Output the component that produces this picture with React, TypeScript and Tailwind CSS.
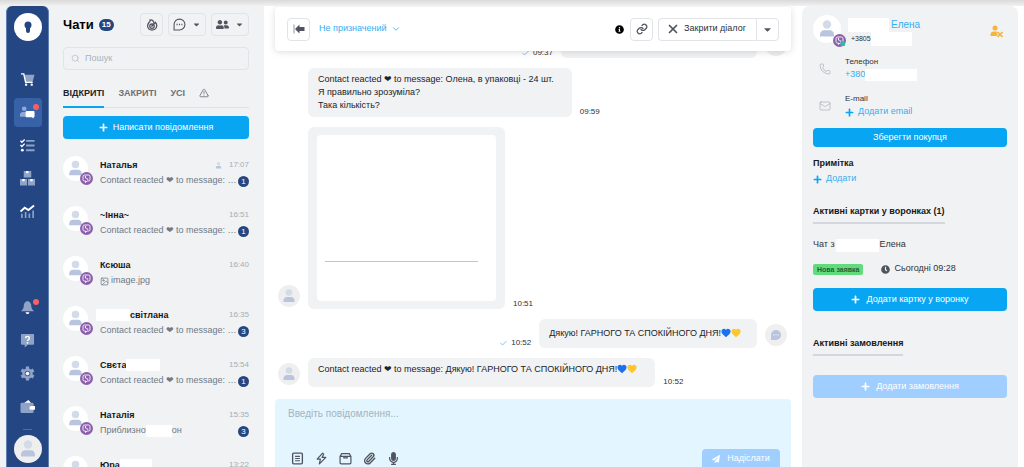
import type { ReactNode } from "react";
import {
	FaCaretDown,
	FaClock,
	FaInfoCircle,
	FaMicrophone,
	FaPaperPlane,
	FaPlus,
	FaUserFriends,
} from "react-icons/fa";
import {
	ChevronDown,
	Image,
	Mail,
	Paperclip,
	Phone,
	Search,
	TriangleAlert,
	X,
} from "lucide-react";

interface Chat {
	id: number;
	name: ReactNode;
	label: string;
	text: ReactNode;
	time: string;
	unread?: number;
	assigned?: boolean;
}

const reacted = "Contact reacted ❤ to message: …";

const chats: Chat[] = [
	{ id: 1, label: "Наталья", name: "Наталья", text: reacted, time: "17:07", unread: 1, assigned: true },
	{ id: 2, label: "Інна", name: "~Інна~", text: reacted, time: "16:51", unread: 1 },
	{
		id: 3,
		label: "Ксюша",
		name: "Ксюша",
		text: (
			<>
				<Image className="size-[9px]" strokeWidth={2} />
				image.jpg
			</>
		),
		time: "16:40",
	},
	{
		id: 4,
		label: "світлана",
		name: (
			<>
				<Mask className="-ml-1 h-3 w-[34px]" />
				світлана
			</>
		),
		text: reacted,
		time: "16:35",
		unread: 3,
	},
	{
		id: 5,
		label: "Свєта",
		name: (
			<>
				Свєта
				<Mask className="h-3 w-[34px]" />
			</>
		),
		text: reacted,
		time: "15:54",
		unread: 1,
	},
	{
		id: 6,
		label: "Наталія",
		name: "Наталія",
		text: (
			<span className="flex items-center">
				Приблизно
				<Mask className="h-3 w-[26px]" />
				он
			</span>
		),
		time: "15:35",
		unread: 3,
	},
	{
		id: 7,
		label: "Юра",
		name: (
			<>
				Юра
				<Mask className="h-3 w-8" />
			</>
		),
		text: reacted,
		time: "13:22",
	},
];

function Mask({ className }: { className: string }) {
	return <span className={`inline-block shrink-0 bg-white ${className}`} />;
}

function Avatar({ className }: { className: string }) {
	return (
		<span className={`flex shrink-0 items-center justify-center rounded-full ${className}`}>
			<svg viewBox="0 0 24 24" className="size-full">
				<circle cx="12" cy="8.2" r="3.6" fill="#d3dae8" />
				<path d="M6 18.5v-1.8c0-2.2 1.7-3.6 3.6-3.6h4.8c2 0 3.6 1.4 3.6 3.6v1.8z" fill="#b9c5de" />
			</svg>
		</span>
	);
}

function ViberBadge({ online }: { online?: boolean }) {
	return (
		<svg viewBox="0 0 26 26" className="absolute -right-[5px] -bottom-1 size-[13px]">
			<circle cx="13" cy="13" r="13" fill="#8a5eab" />
			<path
				d="M9 6h8a3 3 0 0 1 3 3v6a3 3 0 0 1-3 3h-2.7L11 21v-3H9a3 3 0 0 1-3-3V9a3 3 0 0 1 3-3z"
				fill="none"
				stroke="#fff"
				strokeWidth="1.8"
			/>
			<path
				d="M9.5 8.5c0 3.5 2.5 6.5 6.5 7l1-1.6-2-1.4-1 .8c-1-.4-1.9-1.5-2.2-2.5l.8-.8-1.3-2z"
				fill="#fff"
			/>
			{online && <rect x="15" y="15" width="9" height="9" rx="2" fill="#2fb9a4" />}
		</svg>
	);
}

function Heart({ color, label }: { color: "blue" | "yellow"; label: string }) {
	return (
		<svg viewBox="0 0 24 24" role="img" aria-label={label} className="inline-block size-[10px] align-[-2px]">
			<path
				d="M12 22C7 18 1 13.5 1 8a6 6 0 0 1 11-3.2A6 6 0 0 1 23 8c0 5.5-6 10-11 14z"
				fill={color === "blue" ? "#1a70ee" : "#fdc62e"}
			/>
		</svg>
	);
}

function NavItem({ label, active, dot, children }: { label: string; active?: boolean; dot?: boolean; children: ReactNode }) {
	return (
		<a
			href="#"
			aria-label={label}
			className={`relative flex h-[29px] w-7 shrink-0 items-center justify-center rounded ${active ? "bg-[#3762a8]" : ""}`}
		>
			<svg viewBox="0 0 32 32" className="size-[15px]">
				{children}
			</svg>
			{dot && (
				<span className="absolute top-[6px] right-[3px] size-[6px] rounded-full bg-[#fb5f62]" />
			)}
		</a>
	);
}

function Sidebar() {
	return (
		<nav className="ml-[6px] flex w-[43px] shrink-0 flex-col items-center gap-1 rounded-t-md border-x border-[#5f7fb3] bg-[#244683] pt-[7px] pb-1">
			<a href="#" aria-label="Головна" className="mb-5 flex size-7 shrink-0 items-center justify-center rounded-full bg-white">
				<svg viewBox="0 0 28 28" className="size-7">
					<circle cx="14" cy="12" r="3.5" fill="#244683" />
					<path d="M12 12h4v6a2 2 0 0 1-4 0z" fill="#244683" />
				</svg>
			</a>
			<NavItem label="Замовлення">
				<path d="M9 6h22l-4 14H12z" fill="#8fa3c8" />
				<path d="M2 4h6l4 18h15" fill="none" stroke="#fff" strokeWidth="3" />
				<circle cx="13" cy="27" r="2.5" fill="#fff" />
				<circle cx="25" cy="27" r="2.5" fill="#fff" />
			</NavItem>
			<NavItem label="Чати" active dot>
				<circle cx="9" cy="8" r="5" fill="#8fa9d4" />
				<path d="M0 25v-4c0-4 3-6 6-6h7v10z" fill="#8fa9d4" />
				<path d="M14 13h15a2 2 0 0 1 2 2v9a2 2 0 0 1-2 2v3l-4-3H14a2 2 0 0 1-2-2v-9a2 2 0 0 1 2-2z" fill="#fff" />
			</NavItem>
			<NavItem label="Задачі">
				<path d="M13 6h18M13 16h18M13 26h18" stroke="#8fa3c8" strokeWidth="4" />
				<path d="M1 6l3 3 6-6M1 15l3 3 6-6" fill="none" stroke="#fff" strokeWidth="3" />
				<circle cx="5" cy="26" r="3" fill="#fff" />
			</NavItem>
			<NavItem label="Склад">
				<path d="M8 0h16v14H8zM0 17h15v14H0zM17 17h15v14H17z" fill="#8fa3c8" />
				<path d="M13 0h5v5h-5zM5 17h5v5H5zM22 17h5v5h-5z" fill="#fff" />
			</NavItem>
			<NavItem label="Аналітика">
				<path d="M4 21v9M12 17v13M20 20v10M28 14v16" stroke="#8fa3c8" strokeWidth="3.5" />
				<path d="M1 16l9-8 8 5L30 3" fill="none" stroke="#fff" strokeWidth="4" />
			</NavItem>
			<div className="flex-1" />
			<NavItem label="Сповіщення" dot>
				<path d="M16 2c-6 1-8 6-8 11 0 6-3 8-6 11h28c-3-3-6-5-6-11 0-5-2-10-8-11z" fill="#8fa3c8" />
				<path d="M12 26h8c0 5-8 5-8 0z" fill="#fff" />
			</NavItem>
			<NavItem label="Допомога">
				<path d="M4 2h24a2 2 0 0 1 2 2v19a2 2 0 0 1-2 2H17l-7 6v-6H4a2 2 0 0 1-2-2V4a2 2 0 0 1 2-2z" fill="#8fa3c8" />
				<path d="M12 11c0-5 8-5 8 0 0 3-4 3-4 6" fill="none" stroke="#fff" strokeWidth="3" />
				<circle cx="16" cy="21" r="2" fill="#fff" />
			</NavItem>
			<NavItem label="Налаштування">
				<circle cx="16" cy="16" r="11" fill="#8fa3c8" />
				<path d="M16 1v30M3 8.5l26 15M3 23.5l26-15" stroke="#8fa3c8" strokeWidth="7" />
				<circle cx="16" cy="16" r="6" fill="#4465a0" />
				<circle cx="16" cy="16" r="3.8" fill="#fff" />
			</NavItem>
			<NavItem label="Гаманець">
				<path d="M8 9l10-7 6 7z" fill="#fff" />
				<path d="M4 8h22a3 3 0 0 1 3 3v16a3 3 0 0 1-3 3H4a3 3 0 0 1-3-3V11a3 3 0 0 1 3-3z" fill="#8fa3c8" />
				<path d="M24 15h8v8h-8a4 4 0 0 1 0-8z" fill="#fff" />
			</NavItem>
			<div className="mt-1 mb-px h-px w-[9px] bg-[#4c6ca4]" />
			<Avatar className="size-7 bg-[#efefef]" />
		</nav>
	);
}

function ToolButton({ label, className = "", children }: { label: string; className?: string; children: ReactNode }) {
	return (
		<button
			type="button"
			aria-label={label}
			className={`flex h-[23px] shrink-0 items-center justify-center rounded-sm border border-[#e1e3e7] text-[#50545e] ${className}`}
		>
			{children}
		</button>
	);
}

function ChatList() {
	return (
		<section className="flex w-[215px] shrink-0 flex-col overflow-hidden pt-[7px] pr-[15px] pl-[14px]">
			<div className="flex items-center gap-[5px]">
				<h1 className="text-[13px] leading-5 font-bold text-black">Чати</h1>
				<span className="rounded-full bg-[#244683] px-[3px] text-[8px] leading-[12px] font-bold text-white">15</span>
				<div className="flex-1" />
				<ToolButton label="Активність" className="w-[23px]">
					<svg viewBox="0 0 24 24" className="size-3" fill="none" stroke="currentColor" strokeWidth="2.5">
						<path d="M8 2c1 2 0 3-2 5-5 6-3 15 6 15s12-9 7-15c-1 2-2 2-3 2 0-4-3-8-8-7z" />
						<circle cx="12" cy="14" r="4.5" />
						<path d="M12 10v4l3-2" />
					</svg>
				</ToolButton>
				<ToolButton label="Канал" className="w-[38px] gap-[6px]">
					<svg viewBox="0 0 24 24" className="size-[13px]" fill="none" stroke="currentColor" strokeWidth="2">
						<path d="M2 22V12a10 10 0 1 1 10 10z" />
						<path d="M6.5 12h2M11 12h2M15.5 12h2" strokeWidth="2.5" />
					</svg>
					<FaCaretDown className="size-[9px]" />
				</ToolButton>
				<ToolButton label="Менеджери" className="w-[38px] gap-[6px]">
					<FaUserFriends className="size-[13px]" />
					<FaCaretDown className="size-[9px]" />
				</ToolButton>
			</div>
			<label className="mt-[11px] flex h-[23px] shrink-0 items-center gap-[5px] rounded-sm border border-[#e1e3e7] px-[7px]">
				<Search className="size-[9px] text-[#b7bfc9]" />
				<input
					type="search"
					aria-label="Пошук"
					placeholder="Пошук"
					className="min-w-0 flex-1 bg-transparent text-[9px] outline-none placeholder:text-[#a8b2bd]"
				/>
			</label>
			<div role="tablist" className="mt-[13px] flex shrink-0 gap-[14px] border-b border-[#dfe2e6] text-[9px] leading-5 font-bold text-[#6c7076]">
				<button type="button" role="tab" aria-selected className="-mb-px border-b-2 border-[#08a5f2] pb-[3px] text-[#202328]">
					ВІДКРИТІ
				</button>
				<button type="button" role="tab" className="-mb-px border-b-2 border-transparent pb-[3px]">
					ЗАКРИТІ
				</button>
				<button type="button" role="tab" className="-mb-px border-b-2 border-transparent pb-[3px]">
					УСІ
				</button>
				<button type="button" role="tab" aria-label="Помилки" className="-mb-px border-b-2 border-transparent pb-[3px]">
					<TriangleAlert className="size-[10px]" />
				</button>
			</div>
			<button
				type="button"
				className="mt-2 flex h-[23px] shrink-0 items-center justify-center gap-[5px] rounded-sm bg-[#08a5f2] text-[9px] text-white"
			>
				<FaPlus className="size-[9px]" />
				Написати повідомлення
			</button>
			<ul className="mt-[14px]">
				{chats.map((chat) => (
					<li key={chat.id} className="h-[50px]">
						<a href="#" aria-label={chat.label} className="flex gap-3 pt-[3px]">
							<span className="relative size-[25px] shrink-0">
								<Avatar className="size-[25px] bg-white" />
								<ViberBadge />
							</span>
							<span className="min-w-0 flex-1 pt-[3px]">
								<span className="flex h-3 items-center">
									<span className="flex flex-1 items-center text-[9px] leading-3 font-bold text-[#15171a]">{chat.name}</span>
									{chat.assigned && <Avatar className="mr-[5px] size-[11px]" />}
									<span className="text-[8px] text-[#a3aeb8]">{chat.time}</span>
								</span>
								<span className="mt-1 flex h-3 items-center">
									<span className="flex flex-1 items-center gap-[2px] text-[9px] whitespace-nowrap text-[#6f7a86]">
										{chat.text}
									</span>
									{chat.unread && (
										<span className="size-[11px] shrink-0 rounded-full bg-[#244683] text-center text-[8px] leading-[11px] text-white">
											{chat.unread}
										</span>
									)}
								</span>
							</span>
						</a>
					</li>
				))}
			</ul>
		</section>
	);
}

function Check() {
	return (
		<svg viewBox="0 0 14 10" className="mr-1 mb-[2px] h-[6px] w-[7px]" fill="none" stroke="#8ab0f5" strokeWidth="1.8">
			<path d="M1 5l4 4 8-8" />
		</svg>
	);
}

function Time({ children }: { children: ReactNode }) {
	return <time className="text-[8px] leading-[10px] text-[#2e3136]">{children}</time>;
}

function Incoming({ time, avatar, className = "pt-[5px] pr-[18px] pb-[5px] pl-[10px]", children }: { time: string; avatar?: boolean; className?: string; children: ReactNode }) {
	return (
		<div className="flex shrink-0 items-end gap-2">
			<div className="flex h-6 w-[22px] shrink-0">{avatar && <Avatar className="size-[22px] bg-[#efeff0]" />}</div>
			<div className={`min-h-[29px] rounded-md bg-[#f1f2f4] text-[9px] leading-[13px] text-[#202328] ${className}`}>{children}</div>
			<Time>{time}</Time>
		</div>
	);
}

function Outgoing({ time, children }: { time: string; children: ReactNode }) {
	return (
		<div className="flex shrink-0 items-end justify-end">
			<Check />
			<Time>{time}</Time>
			<div className="mx-2 flex min-h-[29px] min-w-[196px] items-center rounded-md bg-[#f1f2f4] pr-4 pl-[10px] text-[9px] leading-[13px] text-[#202328]">
				<span>{children}</span>
			</div>
			<span className="mb-[2px] flex size-[22px] items-center justify-center rounded-full bg-[#efeff0]">
				<svg viewBox="0 0 24 24" className="size-3">
					<path d="M2 22V12a10 10 0 1 1 10 10z" fill="#b9c5de" />
					<path d="M6.5 12h2M11 12h2M15.5 12h2" stroke="#fff" strokeWidth="2" />
				</svg>
			</span>
		</div>
	);
}

function Conversation() {
	return (
		<main className="flex min-w-0 flex-1 flex-col overflow-hidden bg-white px-[11px] pt-px">
			<header className="z-10 flex h-11 shrink-0 items-center rounded-sm bg-white px-3 shadow-[0_1px_7px_rgba(0,0,0,0.14)]">
				<ToolButton label="Згорнути" className="w-[23px]">
					<svg viewBox="0 0 24 20" className="h-[10px] w-3" fill="currentColor">
						<path d="M1 1h2v18H1z" opacity="0.6" />
						<path d="M4 10l9-9v5h10v8H13v5z" />
					</svg>
				</ToolButton>
				<span className="relative ml-[9px] flex items-center text-[#35aef0]">
					<select
						aria-label="Відповідальний"
						className="appearance-none bg-transparent pr-[14px] text-[9px] text-[#35aef0] outline-none"
					>
						<option>Не призначений</option>
					</select>
					<ChevronDown className="pointer-events-none absolute right-0 size-[10px]" />
				</span>
				<div className="flex-1" />
				<FaInfoCircle className="mr-[6px] size-[9px] text-black" />
				<ToolButton label="Посилання" className="mr-[5px] w-[23px]">
					<svg viewBox="0 0 24 24" className="size-3" fill="none" stroke="currentColor" strokeWidth="2.5" strokeLinecap="round">
						<path d="M10 13a5 5 0 0 0 7.5.5l3-3a5 5 0 0 0-7-7l-1.7 1.7" />
						<path d="M14 11a5 5 0 0 0-7.5-.5l-3 3a5 5 0 0 0 7 7l1.7-1.7" />
					</svg>
				</ToolButton>
				<div className="flex">
					<ToolButton label="Закрити діалог" className="gap-1 rounded-r-none border-r-0 pr-[10px] pl-[7px]">
						<X className="size-[14px]" strokeWidth={3} />
						<span className="text-[9px] text-[#2e3136]">Закрити діалог</span>
					</ToolButton>
					<ToolButton label="Інші дії" className="w-[23px] rounded-l-none">
						<FaCaretDown className="size-[11px]" />
					</ToolButton>
				</div>
			</header>
			<div className="flex min-h-0 flex-1 flex-col justify-end gap-[10px] overflow-hidden pr-1 pb-3 pl-[3px]">
				<Outgoing time="09:37">&nbsp;</Outgoing>
				<Incoming time="09:59">
					<p>Contact reacted ❤ to message: Олена, в упаковці - 24 шт.</p>
					<p>Я правильно зрозуміла?</p>
					<p>Така кількість?</p>
				</Incoming>
				<Incoming time="10:51" avatar className="px-[9px] py-2">
					<div className="h-[166px] w-[179px] rounded-sm bg-white px-2 pt-[126px]">
						<div className="mr-[10px] h-px bg-[#c4c4c4]" />
					</div>
				</Incoming>
				<Outgoing time="10:52">
					Дякую! ГАРНОГО ТА СПОКІЙНОГО ДНЯ!
					<Heart color="blue" label="💙" />
					<Heart color="yellow" label="💛" />
				</Outgoing>
				<Incoming time="10:52" avatar>
					Contact reacted ❤ to message: Дякую! ГАРНОГО ТА СПОКІЙНОГО ДНЯ!
					<Heart color="blue" label="💙" />
					<Heart color="yellow" label="💛" />
				</Incoming>
			</div>
			<form className="flex h-[68px] shrink-0 flex-col overflow-hidden rounded-t-sm bg-[#e3f5fe] pt-2 pr-[11px] pl-[13px]">
				<textarea
					aria-label="Повідомлення"
					placeholder="Введіть повідомлення..."
					className="h-[42px] shrink-0 resize-none bg-transparent text-[10px] leading-[14px] outline-none placeholder:text-[#a3b4c0]"
				/>
				<div className="flex shrink-0 items-start">
					<div className="flex gap-[11px] pt-[3px] pl-[3px] text-[#50545e]">
						<button type="button" aria-label="Шаблони">
							<svg viewBox="0 0 24 24" className="size-[13px]" fill="none" stroke="currentColor" strokeWidth="2.5">
								<rect x="3" y="2" width="18" height="20" rx="2" />
								<path d="M7.5 8h9M7.5 12h9M7.5 16h9" strokeWidth="2" />
							</svg>
						</button>
						<button type="button" aria-label="Швидкі дії">
							<svg viewBox="0 0 24 24" className="size-[13px]" fill="none" stroke="currentColor" strokeWidth="2.2" strokeLinejoin="round">
								<path d="M14 2L4 13h6l-2 9 12-12h-7l3-6z" />
							</svg>
						</button>
						<button type="button" aria-label="Товари">
							<svg viewBox="0 0 24 24" className="size-[13px]" fill="none" stroke="currentColor" strokeWidth="2.2">
								<path d="M2 8l3-5h14l3 5v12a2 2 0 0 1-2 2H4a2 2 0 0 1-2-2zM2 8h20M9 8v3h6V8" />
							</svg>
						</button>
						<button type="button" aria-label="Файл">
							<Paperclip className="size-[13px]" strokeWidth={2.5} />
						</button>
						<button type="button" aria-label="Голосове">
							<FaMicrophone className="size-[13px]" />
						</button>
					</div>
					<button
						type="submit"
						disabled
						className="ml-auto flex h-[23px] w-[78px] items-center justify-center gap-[7px] rounded-sm bg-[#9fceff] pb-1 text-[9px] text-white"
					>
						<FaPaperPlane className="size-2" />
						Надіслати
					</button>
				</div>
			</form>
		</main>
	);
}

function ClientPanel() {
	return (
		<aside className="mr-[6px] flex w-[216px] shrink-0 flex-col items-start overflow-hidden rounded-t-lg bg-[#f1f2f4] px-[11px] pt-[9px] text-[9px] text-[#2e3136]">
			<div className="flex w-full">
				<span className="relative size-7 shrink-0">
					<Avatar className="size-7 bg-white" />
					<ViberBadge online />
				</span>
				<div className="ml-[7px]">
					<div className="mt-[3px] flex h-[14px] items-center gap-[2px]">
						<Mask className="h-[14px] w-[41px]" />
						<a href="#" className="text-[10px] leading-3 text-[#35aef0]">Елена</a>
					</div>
					<div className="flex h-[14px] items-center pl-[3px]">
						<span className="text-[7px]">+3805</span>
						<Mask className="h-[14px] w-[41px]" />
					</div>
				</div>
				<button type="button" aria-label="Відв'язати покупця" className="mt-[10px] mr-1 ml-auto size-[13px]">
					<svg viewBox="0 0 26 26" className="size-[13px]">
						<circle cx="10" cy="6" r="5" fill="#f4b53f" />
						<path d="M1 22v-3c0-4 3-6 6-6h6l3 3v6z" fill="#f4b53f" />
						<path d="M15 14l10 10M25 14L15 24" stroke="#f1f2f4" strokeWidth="6" />
						<path d="M15 14l10 10M25 14L15 24" stroke="#f4b53f" strokeWidth="3.5" />
					</svg>
				</button>
			</div>
			<div className="mt-[10px] flex items-center gap-[14px] pl-[6px]">
				<Phone className="size-3 text-[#aeb2b8]" strokeWidth={1.5} />
				<div>
					<div className="text-[8px] leading-3">Телефон</div>
					<div className="flex h-[14px] items-center">
						<a href="tel:+380" className="text-[9px] text-[#35aef0]">+380</a>
						<Mask className="h-3 w-[52px]" />
					</div>
				</div>
			</div>
			<div className="mt-[11px] flex items-center gap-[14px] pl-[6px]">
				<Mail className="size-3 text-[#aeb2b8]" strokeWidth={1.5} />
				<div>
					<div className="text-[8px] leading-3">E-mail</div>
					<button type="button" className="flex h-[14px] items-center gap-1 text-[#35aef0]">
						<FaPlus className="size-[9px] text-[#08a5f2]" />
						Додати email
					</button>
				</div>
			</div>
			<button type="button" className="mt-[9px] h-[19px] w-full shrink-0 rounded-sm bg-[#08a5f2] text-white">
				Зберегти покупця
			</button>
			<h2 className="mt-[9px] leading-[14px] font-bold text-[#15171a]">Примітка</h2>
			<button type="button" className="mt-[2px] flex h-[14px] items-center gap-1 text-[#35aef0]">
				<FaPlus className="size-[9px] text-[#08a5f2]" />
				Додати
			</button>
			<h2 className="mt-[18px] border-b-2 border-[#d3d6dd] pb-[3px] leading-[15px] font-bold text-[#15171a]">
				Активні картки у воронках (1)
			</h2>
			<div className="mt-[14px] flex h-[14px] items-center">
				Чат з
				<Mask className="mx-px h-[13px] w-[43px]" />
				Елена
			</div>
			<div className="mt-[10px] flex h-[14px] items-center">
				<span className="rounded-xs bg-[#62db7c] px-1 text-[7px] leading-[11px] font-bold text-[#24613a]">Нова заявка</span>
				<FaClock className="mr-1 ml-[18px] size-[9px] text-[#50545e]" />
				Сьогодні 09:28
			</div>
			<button type="button" className="mt-[12px] flex h-[23px] w-full shrink-0 items-center justify-center gap-[6px] rounded-sm bg-[#08a5f2] text-white">
				<FaPlus className="size-[9px]" />
				Додати картку у воронку
			</button>
			<h2 className="mt-[25px] border-b-2 border-[#d3d6dd] pb-[3px] leading-[15px] font-bold text-[#15171a]">
				Активні замовлення
			</h2>
			<button
				type="button"
				disabled
				className="mt-[19px] flex h-[23px] w-full shrink-0 items-center justify-center gap-[6px] rounded-sm bg-[#9fceff] text-white"
			>
				<FaPlus className="size-[9px]" />
				Додати замовлення
			</button>
		</aside>
	);
}

export default function App() {
	return (
		<div className="flex h-screen flex-col overflow-hidden bg-white font-['Liberation_Sans','DejaVu_Sans',sans-serif]">
			<div className="h-[6px] shrink-0 bg-linear-to-b from-[#dadada] to-[#f1f1f2]" />
			<div className="flex min-h-0 flex-1">
				<div className="flex shrink-0 bg-[#f1f2f4]">
					<Sidebar />
					<ChatList />
				</div>
				<Conversation />
				<ClientPanel />
			</div>
		</div>
	);
}
